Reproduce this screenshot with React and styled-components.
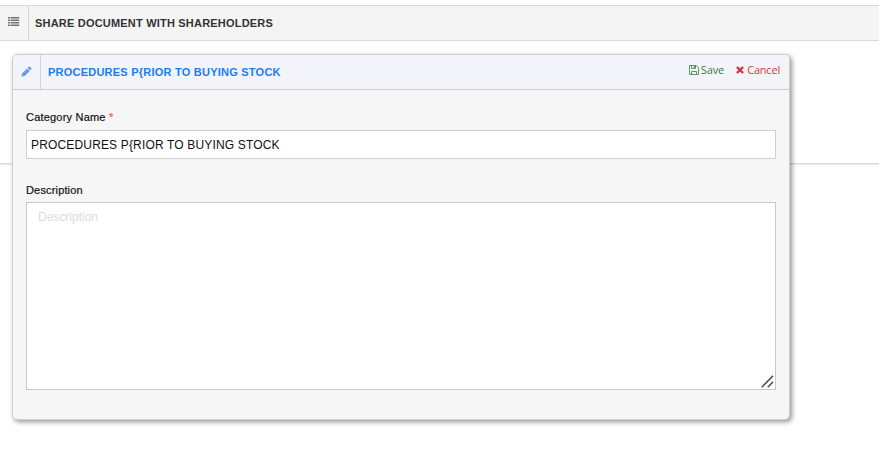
import React from "react";
import styled, { createGlobalStyle } from "styled-components";

const GlobalStyle = createGlobalStyle`
  * { box-sizing: border-box; }
  body {
    margin: 0;
    background: #fff;
    overflow: hidden;
    font-family: "Liberation Sans", Arial, sans-serif;
  }
`;

const Page = styled.main`
  position: relative;
  height: 450px;
  padding-top: 5px;
`;

const Widget = styled.section`
  height: 159px;
  border: solid #dadada;
  border-width: 1px 0;
  border-bottom-color: #d8d8d8;
  box-shadow: 0 1px 1px #eee;
`;

const WidgetHeader = styled.header`
  display: flex;
  height: 35px;
  background: #f4f4f4;
  border-bottom: 1px solid #d9d9d9;
`;

const IconCell = styled.div`
  width: ${(p) => p.$width}px;
  padding: ${(p) => p.$pad};
  border-right: 1px solid #d4d4d8;
  svg { display: block; }
`;

const Title = styled.h1`
  margin: 0;
  padding-left: ${(p) => p.$left}px;
  font-size: 11px;
  font-weight: 700;
  line-height: 35px;
  letter-spacing: ${(p) => p.$spacing}px;
  color: ${(p) => p.$color};
  white-space: nowrap;
`;

const Dialog = styled.section`
  position: absolute;
  left: 12px;
  top: 54px;
  width: 778px;
  height: 366px;
  background: #f6f6f6;
  border: 1px solid #cfcfcf;
  border-radius: 5px;
  box-shadow: 2px 2px 5px rgba(0, 0, 0, 0.42);
`;

const DialogHeader = styled.header`
  display: flex;
  height: 35px;
  background: #f3f3fa;
  border-bottom: 1px solid #cbcbcb;
  border-radius: 4px 4px 0 0;
`;

const Actions = styled.div`
  display: flex;
  gap: 12px;
  margin-left: auto;
  padding-right: 9px;
`;

const Action = styled.button`
  display: flex;
  align-items: center;
  gap: ${(p) => p.$gap}px;
  height: 30px;
  padding: 0;
  border: 0;
  background: none;
  font: 11px/16px "Open Sans", sans-serif;
  letter-spacing: ${(p) => p.$spacing}px;
  color: ${(p) => p.$color};
  svg { display: block; flex: none; }
`;

const Form = styled.form`
  display: flex;
  flex-direction: column;
  padding: 19px 13px 0;
`;

const Label = styled.label`
  display: block;
  height: ${(p) => p.$height}px;
  font-size: 11px;
  line-height: 16px;
  letter-spacing: ${(p) => p.$spacing}px;
  color: #111;
  -webkit-text-stroke: 0.2px #111;
`;

const Required = styled.span`
  color: #f4694c;
  -webkit-text-stroke: 0.25px #f4694c;
`;

const Input = styled.input`
  width: 750px;
  height: 29px;
  margin-bottom: 23px;
  padding: 0 4px;
  border: 1px solid #cfcfcf;
  border-radius: 0;
  outline: 0;
  background: #fff;
  font: 12px "Liberation Sans", Arial, sans-serif;
  letter-spacing: ${(p) => p.$spacing}px;
  color: #111;
`;

const TextBox = styled.div`
  position: relative;
  width: 750px;
  height: 188px;
`;

const TextArea = styled.textarea`
  display: block;
  width: 100%;
  height: 100%;
  padding: 6px 11px;
  border: 1px solid #c8c8c8;
  border-radius: 0;
  outline: 0;
  resize: none;
  background: #fff;
  font: 12px/16px "Liberation Sans", Arial, sans-serif;
  &::placeholder { color: #dcdcdc; opacity: 1; }
`;

const ResizeGrip = styled.svg`
  position: absolute;
  right: 2px;
  bottom: 2px;
`;

const ListIcon = () => (
  <svg width="12" height="9" viewBox="0 0 12 9" fill="#707070">
    {[0, 2.5, 5, 7.5].map((y) => (
      <g key={y}>
        <rect x="0" y={y} width="1.9" height="1.5" />
        <rect x="2.6" y={y} width="8.6" height="1.5" />
      </g>
    ))}
  </svg>
);

const PencilIcon = () => (
  <svg width="11" height="11" viewBox="0 0 11 11" fill="#5c96fa">
    <path d="M0.5 10.5 1 7.4 6.1 2.3 8.7 4.9 3.6 10Z M6.7 1.7 7.7.7Q8.3.2 8.9.8L10.2 2.1Q10.8 2.7 10.2 3.3L9.3 4.3Z" />
    <path d="M1.5 8.5 2.5 9.5 M2.3 7.5 6.3 3.5" stroke="#b9d2ff" strokeWidth=".6" />
  </svg>
);

const SaveIcon = () => (
  <svg width="10" height="10" viewBox="0 0 10 10" fill="none" stroke="#5a985c">
    <path d="M.5.5H7.4L9.5 2.6V9.5H.5Z" />
    <path d="M2.5.5V3.5H6.5V.5M2.5 9.5V6.5H7.5V9.5" />
    <path d="M5.4.8V3" strokeWidth="1.2" />
  </svg>
);

const CancelIcon = () => (
  <svg width="8" height="8" viewBox="0 0 8 8" stroke="#cd3b37" strokeWidth="2.4">
    <path d="M.9 1 7.1 7M7.1 1 .9 7" />
  </svg>
);

export default function App() {
  return (
    <>
      <GlobalStyle />
      <Page>
        <Widget>
          <WidgetHeader>
            <IconCell $width={29} $pad="11px 0 0 8px"><ListIcon /></IconCell>
            <Title $left={6} $spacing={0.2} $color="#333">SHARE DOCUMENT WITH SHAREHOLDERS</Title>
          </WidgetHeader>
        </Widget>
        <Dialog>
          <DialogHeader>
            <IconCell $width={28} $pad="11px 0 0 8px"><PencilIcon /></IconCell>
            <Title $left={7} $spacing={0.23} $color="#1b7df5">PROCEDURES P{"{"}RIOR TO BUYING STOCK</Title>
            <Actions>
              <Action type="button" $gap={2} $spacing={-0.1} $color="#397f3b"><SaveIcon />Save</Action>
              <Action type="button" $gap={3} $spacing={-0.2} $color="#d13c38"><CancelIcon />Cancel</Action>
            </Actions>
          </DialogHeader>
          <Form>
            <Label htmlFor="category" $height={21} $spacing={0.2}>Category Name <Required>*</Required></Label>
            <Input id="category" $spacing={0.16} defaultValue="PROCEDURES P{RIOR TO BUYING STOCK" />
            <Label htmlFor="description" $height={20} $spacing={0.16}>Description</Label>
            <TextBox>
              <TextArea id="description" placeholder="Description" />
              <ResizeGrip width="13" height="13" viewBox="0 0 13 13" stroke="#555" strokeWidth="1.6">
                <path d="M.7 12.2 12 .9M6.7 12.2 12 6.9" />
              </ResizeGrip>
            </TextBox>
          </Form>
        </Dialog>
      </Page>
    </>
  );
}
